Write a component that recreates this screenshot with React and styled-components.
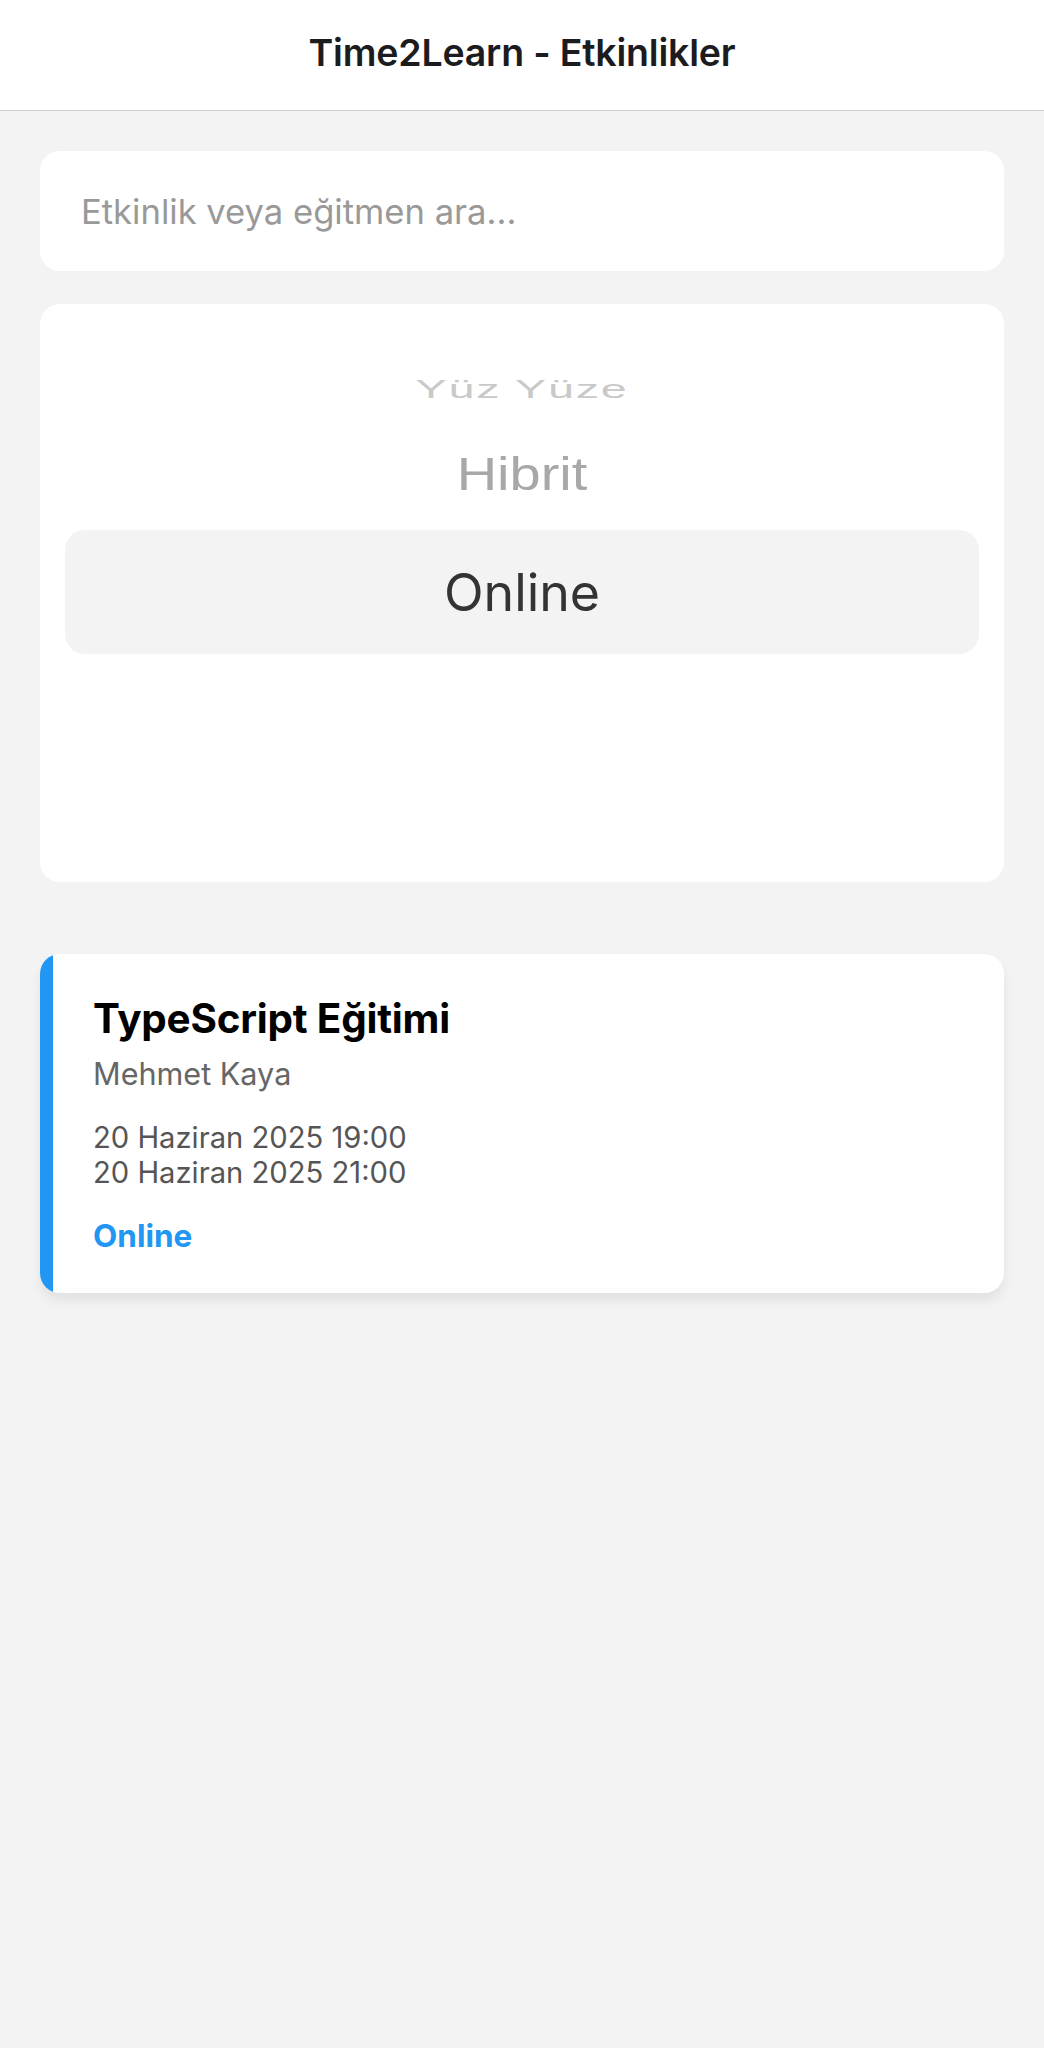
import React from "react";
import styled, { createGlobalStyle } from "styled-components";

const GlobalStyle = createGlobalStyle`
  html, body {
    margin: 0;
    padding: 0;
    background: #f3f3f3;
  }
  body {
    font-family: Inter, "Noto Sans", "Liberation Sans", sans-serif;
    min-height: 2048px;
  }
  * { box-sizing: border-box; }
`;

const Page = styled.div`
  min-height: 2048px;
  background: #f3f3f3;
  display: flex;
  flex-direction: column;
`;

const Header = styled.header`
  height: 111px;
  background: #ffffff;
  border-bottom: 1px solid #cfcfcf;
  display: flex;
  align-items: center;
  justify-content: center;
  padding-bottom: 5px;
`;

const HeaderTitle = styled.h1`
  margin: 0;
  font-size: 37.5px;
  font-weight: 600;
  color: #1c1c1e;
  letter-spacing: -0.2px;
`;

const Content = styled.main`
  display: flex;
  flex-direction: column;
  padding: 40px 40px;
`;

const SearchInput = styled.input`
  height: 120px;
  width: 100%;
  border: none;
  outline: none;
  border-radius: 20px;
  background: #ffffff;
  padding: 0 41px;
  font-family: Inter, "Noto Sans", sans-serif;
  font-size: 34.6px;
  color: #333;
  &::placeholder {
    color: #999999;
  }
`;

const PickerCard = styled.section`
  margin-top: 33px;
  height: 578px;
  background: #ffffff;
  border-radius: 20px;
  padding: 42px 25px 0;
  display: flex;
  flex-direction: column;
  overflow: hidden;
`;

const WheelItem = styled.div`
  height: ${(p) => p.$height}px;
  display: flex;
  align-items: center;
  justify-content: center;
  font-family: "Liberation Sans", Arial, sans-serif;
  font-size: ${(p) => p.$size}px;
  color: ${(p) => p.$color};
  letter-spacing: ${(p) => p.$spacing || 0}px;
  transform: scale(${(p) => p.$sx || 1}, ${(p) => p.$sy || 1});
  user-select: none;
`;

const SelectedRow = styled.div`
  margin-top: 14px;
  height: 124px;
  border-radius: 20px;
  background: #f3f3f3;
  display: flex;
  align-items: center;
  justify-content: center;
  font-family: Inter, "Noto Sans", sans-serif;
  font-size: 51.8px;
  color: #333333;
`;

const EventList = styled.div`
  margin-top: 72px;
  display: flex;
  flex-direction: column;
  gap: 24px;
`;

const EventCard = styled.article`
  display: flex;
  background: #ffffff;
  border-radius: 20px;
  overflow: hidden;
  box-shadow: 0 8px 12px rgba(0, 0, 0, 0.07);
`;

const AccentBar = styled.div`
  width: 13px;
  flex-shrink: 0;
  background: ${(p) => p.$color};
`;

const EventBody = styled.div`
  flex: 1;
  padding: 42px 40px 40px 40px;
  display: flex;
  flex-direction: column;
`;

const EventTitle = styled.h2`
  margin: 0;
  font-size: 40.4px;
  line-height: 46px;
  font-weight: 700;
  color: #000000;
  letter-spacing: -0.2px;
`;

const Instructor = styled.div`
  margin-top: 14px;
  font-size: 30.6px;
  line-height: 36px;
  color: #666666;
`;

const DateBlock = styled.div`
  margin-top: 28px;
  display: flex;
  flex-direction: column;
  font-size: 29.2px;
  line-height: 35px;
  color: #555555;
`;

const TypeTag = styled.div`
  margin-top: 28px;
  font-size: 31.5px;
  line-height: 35px;
  font-weight: 700;
  color: ${(p) => p.$color};
`;

const events = [
  {
    title: "TypeScript Eğitimi",
    instructor: "Mehmet Kaya",
    start: "20 Haziran 2025 19:00",
    end: "20 Haziran 2025 21:00",
    type: "Online",
    color: "#2196F3",
  },
];

export default function App() {
  return (
    <Page>
      <GlobalStyle />
      <Header>
        <HeaderTitle>Time2Learn - Etkinlikler</HeaderTitle>
      </Header>
      <Content>
        <SearchInput placeholder="Etkinlik veya eğitmen ara..." />
        <PickerCard>
          <WheelItem $height={84} $size={53} $color="#c9c9c9" $sx={0.88} $sy={0.5} $spacing={2}>
            Yüz Yüze
          </WheelItem>
          <WheelItem $height={86} $size={56} $color="#a8a8a8" $sy={0.84}>
            Hibrit
          </WheelItem>
          <SelectedRow>Online</SelectedRow>
        </PickerCard>
        <EventList>
          {events.map((e) => (
            <EventCard key={e.title}>
              <AccentBar $color={e.color} />
              <EventBody>
                <EventTitle>{e.title}</EventTitle>
                <Instructor>{e.instructor}</Instructor>
                <DateBlock>
                  <span>{e.start}</span>
                  <span>{e.end}</span>
                </DateBlock>
                <TypeTag $color={e.color}>{e.type}</TypeTag>
              </EventBody>
            </EventCard>
          ))}
        </EventList>
      </Content>
    </Page>
  );
}
